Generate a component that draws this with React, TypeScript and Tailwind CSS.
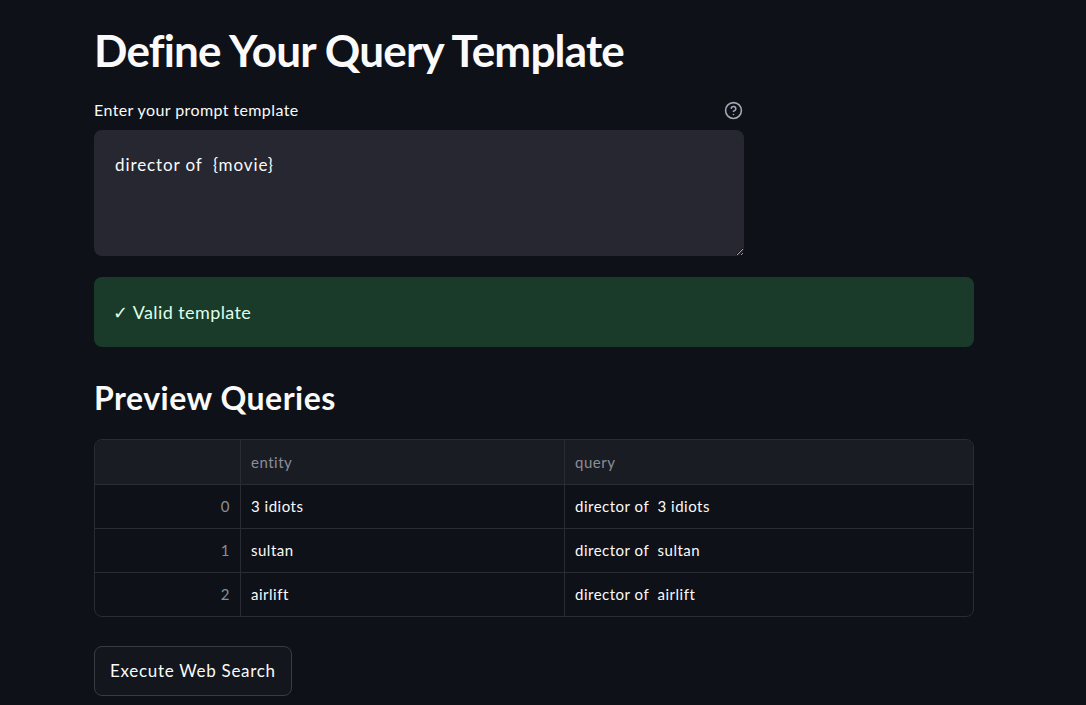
import { CircleHelp } from "lucide-react";

const rows = [
    { entity: "3 idiots", query: "director of  3 idiots" },
    { entity: "sultan", query: "director of  sultan" },
    { entity: "airlift", query: "director of  airlift" },
];

export default function App() {
    return (
        <div className="min-h-screen bg-[#0e1117] text-[#fafafa] font-['Lato','Noto_Sans',sans-serif] [color-scheme:dark]">
            <div className="w-[880px] ml-[94px] pt-[24px] flex flex-col">
                {/* Title */}
                <h1 className="text-[44px] leading-[52px] font-bold tracking-[-0.8px]">Define Your Query Template</h1>

                {/* Prompt input */}
                <div className="w-[650px] mt-[22px]">
                    <div className="flex items-center justify-between h-[24px] mb-[8px]">
                        <label className="text-[16px] tracking-[0.4px]">Enter your prompt template</label>
                        <CircleHelp className="w-[19px] h-[19px] text-[#a3a8b8] mr-[1px]" strokeWidth={2} />
                    </div>
                    <textarea
                        defaultValue="director of  {movie}"
                        className="block w-full h-[126px] rounded-[8px] bg-[#262730] px-[21px] pt-[23px] text-[17px] tracking-[0.9px] leading-[24px] text-[#fafafa] outline-none resize-y"
                    />
                </div>

                {/* Success box */}
                <div className="mt-[21px] h-[70px] rounded-[8px] bg-[#1a3b2a] px-[19px] flex items-center text-[18px] tracking-[0.4px] text-[#dffde9]">
                    ✓ Valid template
                </div>

                {/* Preview */}
                <h2 className="mt-[29px] text-[32px] leading-[44px] font-bold tracking-[0.5px]">Preview Queries</h2>

                <div className="mt-[19px] rounded-[8px] border border-[#2a2c33] overflow-hidden text-[15px] tracking-[0.5px]">
                    <div className="grid grid-cols-[146px_324px_1fr] h-[45px] bg-[#1a1c24] border-b border-[#2a2c33]">
                        <div className="border-r border-[#2a2c33]" />
                        <div className="border-r border-[#2a2c33] px-[10px] flex items-center text-[#8c8e96]">entity</div>
                        <div className="px-[10px] flex items-center text-[#8c8e96]">query</div>
                    </div>
                    {rows.map((r, i) => (
                        <div
                            key={i}
                            className={`grid grid-cols-[146px_324px_1fr] ${i < rows.length - 1 ? "h-[44px] border-b border-[#2a2c33]" : "h-[43px]"}`}
                        >
                            <div className="border-r border-[#2a2c33] px-[10px] flex items-center justify-end text-[#8c8e96]">{i}</div>
                            <div className="border-r border-[#2a2c33] px-[10px] flex items-center">{r.entity}</div>
                            <div className="px-[10px] flex items-center whitespace-pre">{r.query}</div>
                        </div>
                    ))}
                </div>

                {/* Action */}
                <div className="mt-[29px]">
                    <button className="h-[50px] px-[15px] rounded-[8px] border border-[#3a3c44] bg-[#13161d] text-[17px] tracking-[0.7px]">
                        Execute Web Search
                    </button>
                </div>
            </div>
        </div>
    );
}
